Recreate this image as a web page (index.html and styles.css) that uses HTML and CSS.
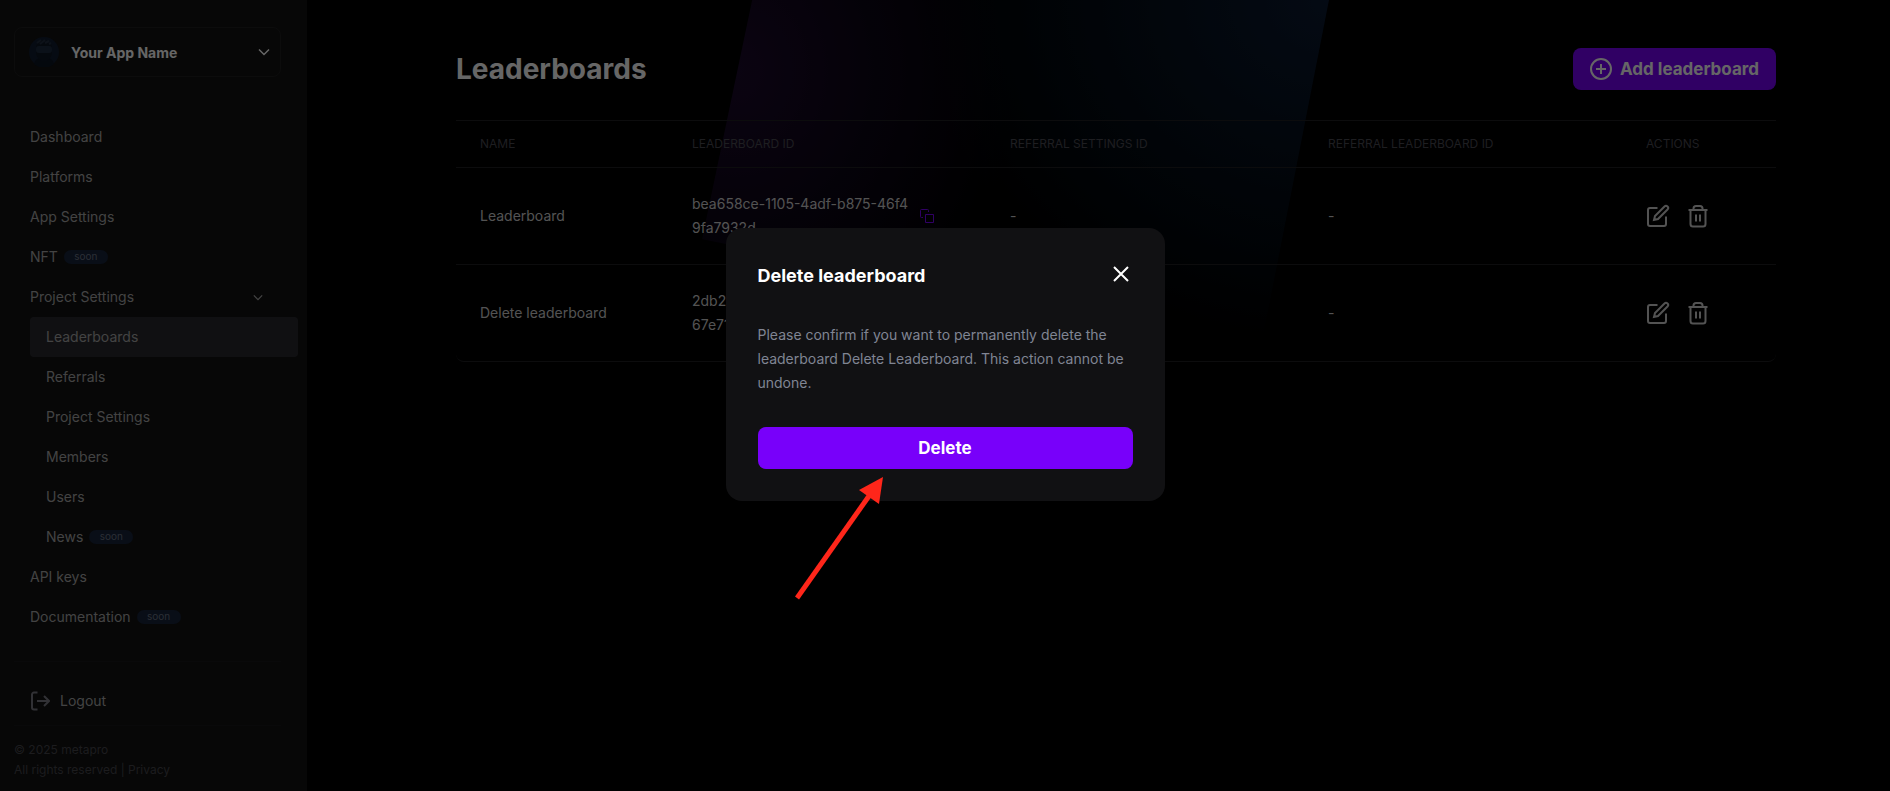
FILE: index.html
```html
<!DOCTYPE html>
<html lang="en">
<head>
    <meta charset="UTF-8">
    <meta name="viewport" content="width=device-width, initial-scale=1.0">
    <title>Leaderboards</title>
    <link rel="stylesheet" href="styles.css">
</head>
<body>
    <svg class="sprite" width="0" height="0" aria-hidden="true">
        <symbol id="chevron" viewBox="0 0 12 8"><path d="M1 1.5l5 5 5-5"/></symbol>
        <symbol id="edit" viewBox="0 0 24 24"><path d="M11.5 4H4a2 2 0 0 0-2 2v14a2 2 0 0 0 2 2h14a2 2 0 0 0 2-2v-7.5M18.5 2.5a2.1 2.1 0 0 1 3 3L12 15l-4 1 1-4z"/></symbol>
        <symbol id="trash" viewBox="0 0 24 24"><path d="M2.5 6h19M4.500 6v14a2.500 2.500 0 0 0 2.500 2.500h10a2.500 2.500 0 0 0 2.500-2.500V6M7.500 6V4.500A2.500 2.500 0 0 1 10 2h4a2.500 2.500 0 0 1 2.500 2.500V6M10 10.500v7M14 10.500v7"/></symbol>
        <symbol id="copy" viewBox="0 0 14 14"><path d="M5.500 5.500h8v8h-8zM3 8.500H1.500a1 1 0 0 1-1-1v-6a1 1 0 0 1 1-1h6a1 1 0 0 1 1 1V3"/></symbol>
    </svg>

    <div class="layout">
        <aside class="sidebar">
            <button class="app-select" type="button">
                <svg class="avatar" viewBox="0 0 30 30" aria-hidden="true">
                    <circle cx="15" cy="15" r="15" fill="#111d31"/>
                    <path d="M5 27c1-5 5-7 10-7s9 2 10 7a15 15 0 0 1-20 0z" fill="#0c1422"/>
                    <path d="M7 9c2-5 5-6 8-6s7 2 8 6v8c-1 4-4 7-8 7s-7-3-8-7z" fill="#0e1725"/>
                    <path d="M8 6l4-3M11 7l5-4M16 6l4-2M20 7l2-1" stroke="#222e40" fill="none"/>
                    <rect x="7" y="9" width="16" height="7" rx="3" fill="#1d2c40"/>
                </svg>
                <span class="app-name">Your App Name</span>
                <svg class="chevron" width="12" height="8"><use href="#chevron"/></svg>
            </button>

            <nav class="nav">
                <a href="#">Dashboard</a>
                <a href="#">Platforms</a>
                <a href="#">App Settings</a>
                <a href="#">NFT <span class="badge">soon</span></a>
                <a href="#">Project Settings <svg class="chevron" width="10" height="7"><use href="#chevron"/></svg></a>
                <div class="subnav">
                    <a href="#" class="active">Leaderboards</a>
                    <a href="#">Referrals</a>
                    <a href="#">Project Settings</a>
                    <a href="#">Members</a>
                    <a href="#">Users</a>
                    <a href="#">News <span class="badge">soon</span></a>
                </div>
                <a href="#">API keys</a>
                <a href="#">Documentation <span class="badge">soon</span></a>
            </nav>

            <div class="logout">
                <a href="#">
                    <svg width="20" height="20" viewBox="0 0 20 20" aria-hidden="true"><path d="M7.500 1.500H4a2 2 0 0 0-2 2v13a2 2 0 0 0 2 2h3.500M7 10h12M14 5l5 5-5 5"/></svg>
                    Logout
                </a>
            </div>
            <footer class="copyright">
                <div>© 2025 metapro</div>
                <div>All rights reserved | <a href="#">Privacy</a></div>
            </footer>
        </aside>

        <main class="main">
            <div class="beam"></div>
            <header class="page-header">
                <h1>Leaderboards</h1>
                <button class="button add" type="button">
                    <svg width="22" height="22" viewBox="0 0 22 22" aria-hidden="true"><circle cx="11" cy="11" r="10"/><path d="M11 6v10M6 11h10"/></svg>
                    Add leaderboard
                </button>
            </header>

            <table class="table">
                <thead>
                    <tr>
                        <th class="col-name">Name</th>
                        <th>Leaderboard ID</th>
                        <th>Referral settings ID</th>
                        <th>Referral leaderboard ID</th>
                        <th class="col-actions">Actions</th>
                    </tr>
                </thead>
                <tbody>
                    <tr>
                        <td>Leaderboard</td>
                        <td>
                            <div class="id-cell">
                                <span>bea658ce-1105-4adf-b875-46f4<br>9fa7932d</span>
                                <button class="icon-button copy" type="button" aria-label="Copy"><svg width="14" height="14"><use href="#copy"/></svg></button>
                            </div>
                        </td>
                        <td>-</td>
                        <td>-</td>
                        <td>
                            <div class="actions">
                                <button class="icon-button" type="button" aria-label="Edit"><svg width="24" height="24"><use href="#edit"/></svg></button>
                                <button class="icon-button" type="button" aria-label="Delete"><svg width="24" height="24"><use href="#trash"/></svg></button>
                            </div>
                        </td>
                    </tr>
                    <tr>
                        <td>Delete leaderboard</td>
                        <td>
                            <div class="id-cell">
                                <span>2db2<br>67e71</span>
                            </div>
                        </td>
                        <td></td>
                        <td>-</td>
                        <td>
                            <div class="actions">
                                <button class="icon-button" type="button" aria-label="Edit"><svg width="24" height="24"><use href="#edit"/></svg></button>
                                <button class="icon-button" type="button" aria-label="Delete"><svg width="24" height="24"><use href="#trash"/></svg></button>
                            </div>
                        </td>
                    </tr>
                </tbody>
            </table>
        </main>
    </div>

    <div class="overlay">
        <div class="modal" role="dialog" aria-labelledby="modal-title">
            <div class="modal-header">
                <h2 id="modal-title">Delete leaderboard</h2>
                <button class="icon-button" type="button" aria-label="Close"><svg width="28" height="28" viewBox="0 0 28 28"><path d="M9 7l14 14M23 7L9 21"/></svg></button>
            </div>
            <p>Please confirm if you want to permanently delete the leaderboard Delete Leaderboard. This action cannot be undone.</p>
            <button class="button" type="button">Delete</button>
            <svg class="arrow" width="90" height="124" viewBox="0 0 90 124" aria-hidden="true">
                <path d="M2 121L74 19" stroke="#ff261a" stroke-width="5"/>
                <path d="M88 0L64 13l20 14z" fill="#ff261a"/>
            </svg>
        </div>
    </div>
</body>
</html>
```

FILE: styles.css
```css
* {
    box-sizing: border-box;
}
body {
    margin: 0;
    background-color: #000;
    color: #fff;
    font-family: Inter, "Liberation Sans", sans-serif;
    font-size: 14px;
    line-height: 24px;
}
a {
    color: inherit;
    text-decoration: none;
}
button {
    font-family: inherit;
    color: inherit;
    border: none;
    cursor: pointer;
}
svg {
    flex-shrink: 0;
    fill: none;
    stroke: currentColor;
    stroke-width: 2;
}
.sprite {
    position: absolute;
}
.layout {
    display: flex;
    min-height: 100vh;
}

/* sidebar */
.sidebar {
    width: 307px;
    flex-shrink: 0;
    padding: 27px 26px 8px 14px;
    background-color: #121212;
}
.app-select {
    display: flex;
    align-items: center;
    gap: 12px;
    width: 100%;
    height: 50px;
    padding: 0 10px 0 14px;
    background: none;
    border: 1px solid #1e1e1f;
    border-radius: 8px;
    font-size: 14px;
    font-weight: 700;
}
.avatar {
    width: 30px;
    height: 30px;
    stroke: none;
}
.chevron {
    margin-left: auto;
    stroke-width: 1.5;
}
.nav {
    margin: 40px -17px 24px 0;
    padding-left: 16px;
    color: #a8a8a8;
}
.nav a {
    display: flex;
    align-items: center;
    height: 40px;
    padding-right: 35px;
    border-radius: 4px;
}
.subnav a {
    padding-left: 16px;
}
.subnav .active {
    background-color: #2a2a2f;
}
.badge {
    width: 44px;
    height: 14px;
    margin-left: 6px;
    border-radius: 7px;
    background-color: #17233a;
    color: #6c7585;
    font-size: 10px;
    line-height: 13px;
    text-align: center;
}
.logout {
    padding: 19px 16px 4px;
    border-top: 1px solid #18181a;
    border-bottom: 1px solid #18181a;
    color: #a8a8a8;
}
.logout a {
    display: flex;
    align-items: center;
    gap: 10px;
    height: 40px;
}
.logout svg {
    color: #7c7c84;
}
.copyright {
    padding-top: 14px;
    color: #46464c;
    font-size: 12px;
    line-height: 20px;
}

/* content */
.main {
    position: relative;
    flex: 1;
    padding: 48px 114px 48px 149px;
}
.beam {
    position: absolute;
    top: 0;
    left: 395px;
    width: 627px;
    height: 352px;
    clip-path: polygon(8% 0, 100% 0, 89% 100%, 0 68%);
    background:
        radial-gradient(ellipse 65% 100% at 100% 0, #0b1a32 0%, #030b14 60%, transparent 100%),
        radial-gradient(ellipse 45% 90% at 5% 20%, #1c0a2c 0%, #0c0516 50%, transparent 100%);
}
.page-header {
    position: relative;
    display: flex;
    align-items: center;
    justify-content: space-between;
    margin-bottom: 30px;
}
h1 {
    margin: 0;
    font-size: 28px;
    line-height: 40px;
    font-weight: 700;
}
.button {
    display: flex;
    align-items: center;
    justify-content: center;
    gap: 8px;
    height: 42px;
    padding: 0 17px;
    border-radius: 8px;
    background-color: #7800fa;
    font-size: 17px;
    font-weight: 700;
}
.table {
    position: relative;
    width: 100%;
    table-layout: fixed;
    border-collapse: separate;
    border-spacing: 0;
    border-top: 1px solid #202022;
}
.table th,
.table td {
    padding: 0 24px;
    border-bottom: 1px solid #202022;
    text-align: left;
}
.table th {
    height: 47px;
    color: #4b4b54;
    font-size: 12px;
    font-weight: 400;
    text-transform: uppercase;
}
.table td {
    height: 97px;
    color: #d0d0d0;
}
.table tr:last-child td:first-child {
    border-bottom-left-radius: 8px;
}
.table tr:last-child td:last-child {
    border-bottom-right-radius: 8px;
}
.table .col-name {
    width: 212px;
}
.table .col-actions {
    width: 154px;
}
.id-cell {
    display: flex;
    align-items: center;
    gap: 12px;
    white-space: nowrap;
}
.icon-button {
    display: flex;
    padding: 0;
    background: none;
}
.copy svg {
    color: #7800fa;
    stroke-width: 1;
}
.actions {
    display: flex;
    gap: 16px;
}

/* modal */
.overlay {
    position: fixed;
    inset: 0;
    display: flex;
    align-items: center;
    justify-content: center;
    padding-bottom: 62px;
    background-color: rgba(0, 0, 0, 0.6);
}
.modal {
    position: relative;
    width: 439px;
    padding: 32px;
    border-radius: 16px;
    background-color: #111113;
}
.modal-header {
    display: flex;
    align-items: flex-start;
    justify-content: space-between;
    margin-bottom: 31px;
}
.modal h2 {
    margin: 0;
    font-size: 18px;
    line-height: 32px;
    font-weight: 700;
}
.modal p {
    margin: 0 0 32px;
    color: #808593;
}
.modal .button {
    width: 100%;
}
.arrow {
    position: absolute;
    top: 249px;
    left: 69px;
    stroke: none;
}
```
